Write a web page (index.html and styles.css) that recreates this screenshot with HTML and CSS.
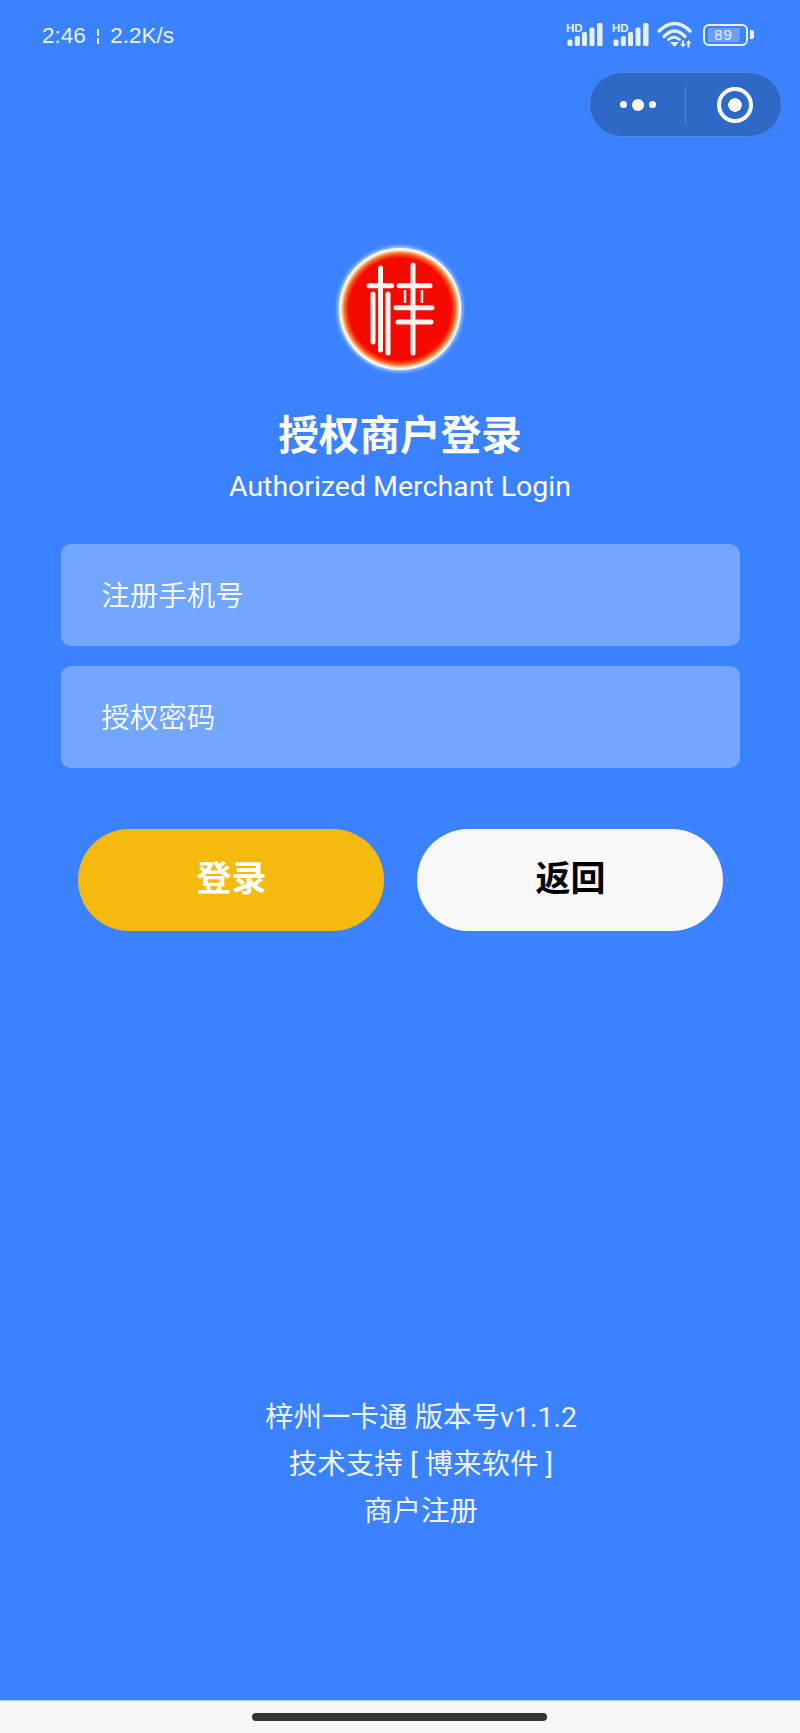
FILE: index.html
```html
<!DOCTYPE html>
<html lang="zh-CN">
<head>
    <meta charset="UTF-8">
    <meta name="viewport" content="width=device-width, initial-scale=1.0">
    <title>授权商户登录</title>
    <link rel="stylesheet" href="styles.css">
</head>
<body>

    <!-- Status bar -->
    <div class="status-bar">
        <span class="status-time">2:46 <i class="status-sep"></i> 2.2K/s</span>
        <div class="status-icons">
            <svg class="signal" width="37" height="23" viewBox="0 0 37 23">
                <text x="0" y="8.500" class="hd">HD</text>
                <rect x="1.500" y="16.500" width="5" height="6.500" rx="1.500"/>
                <rect x="8.800" y="13" width="5" height="10" rx="1.500"/>
                <rect x="16" y="9" width="5" height="14" rx="1.500"/>
                <rect x="23.500" y="4.500" width="5" height="18.500" rx="1.500"/>
                <rect x="31" y="0" width="5.500" height="23" rx="1.500"/>
            </svg>
            <svg class="signal" width="37" height="23" viewBox="0 0 37 23">
                <text x="0" y="8.500" class="hd">HD</text>
                <rect x="1.500" y="16.500" width="5" height="6.500" rx="1.500"/>
                <rect x="8.800" y="13" width="5" height="10" rx="1.500"/>
                <rect x="16" y="9" width="5" height="14" rx="1.500"/>
                <rect x="23.500" y="4.500" width="5" height="18.500" rx="1.500"/>
                <rect x="31" y="0" width="5.500" height="23" rx="1.500"/>
            </svg>
            <svg class="wifi" width="35" height="26" viewBox="0 0 35 26">
                <path d="M2 9 Q17.500 -6 33 9"/>
                <path d="M7 14.500 Q17.500 3.500 28 14.500"/>
                <path d="M11.500 17.500 Q17 13 22.500 17.500" class="wifi-thin"/>
                <polygon class="wifi-fill" points="13,20 22,20 17.500,25"/>
                <polygon class="wifi-fill" points="26,25.500 23,22 25,22 25,18.500 27,18.500 27,22 29,22"/>
                <polygon class="wifi-fill" points="31.500,18 28.800,21.500 30.500,21.500 30.500,25.500 32.500,25.500 32.500,21.500 34.500,21.500"/>
            </svg>
            <div class="battery">
                <div class="battery-body"><span class="battery-level">89</span></div>
                <div class="battery-tip"></div>
            </div>
        </div>
    </div>

    <!-- Mini program capsule -->
    <div class="capsule-row">
        <div class="capsule">
            <div class="capsule-dots"><i></i><b></b><i></i></div>
            <div class="capsule-line"></div>
            <div class="capsule-target"></div>
        </div>
    </div>

    <!-- Login -->
    <main class="login">
        <svg class="logo" width="130" height="130" viewBox="0 0 130 130">
            <defs>
                <radialGradient id="logoFill">
                    <stop offset="0.84" stop-color="#f60a00"/>
                    <stop offset="0.91" stop-color="#fa6a20"/>
                    <stop offset="0.97" stop-color="#fff2e6"/>
                    <stop offset="1" stop-color="#ffffff"/>
                </radialGradient>
                <filter id="logoGlow" x="-10%" y="-10%" width="120%" height="120%">
                    <feGaussianBlur stdDeviation="2"/>
                </filter>
            </defs>
            <circle cx="65" cy="65" r="62" fill="#d8e7ff" filter="url(#logoGlow)"/>
            <circle cx="65" cy="65" r="61" fill="url(#logoFill)"/>
            <g class="logo-mark">
                <line x1="34" y1="41.700" x2="56.700" y2="41.700"/>
                <line x1="45.500" y1="24" x2="45.500" y2="106"/>
                <line x1="38" y1="50" x2="38" y2="98"/>
                <line x1="53" y1="50" x2="53" y2="109"/>
                <line x1="64" y1="41.700" x2="95" y2="41.700"/>
                <line x1="61" y1="63.700" x2="97" y2="63.700"/>
                <line x1="63" y1="78" x2="96" y2="78"/>
                <line x1="78" y1="21" x2="78" y2="109"/>
            </g>
            <g class="logo-tick">
                <line x1="70" y1="46" x2="70" y2="59"/>
                <line x1="87" y1="46" x2="87" y2="59"/>
            </g>
        </svg>
        <h1 class="login-title">授权商户登录</h1>
        <p class="login-sub">Authorized Merchant Login</p>

        <div class="login-form">
            <input class="field" type="text" placeholder="注册手机号">
            <input class="field" type="password" placeholder="授权密码">
        </div>

        <div class="login-btns">
            <button class="btn btn-yellow">登录</button>
            <button class="btn btn-white">返回</button>
        </div>
    </main>

    <!-- Footer links -->
    <div class="foot">
        <p>梓州一卡通 版本号v1.1.2</p>
        <p>技术支持 [ 博来软件 ]</p>
        <p>商户注册</p>
    </div>

    <!-- Home indicator -->
    <div class="nav-bar"><div class="nav-pill"></div></div>

</body>
</html>
```

FILE: styles.css
```css
* {
    box-sizing: border-box;
}

html, body {
    margin: 0;
    padding: 0;
}

body {
    width: 800px;
    height: 1733px;
    display: flex;
    flex-direction: column;
    background-color: #3a82ff;
    color: white;
    font-family: Roboto, "Noto Sans CJK SC", sans-serif;
    overflow: hidden;
}

/* Status bar */
.status-bar {
    height: 72px;
    padding: 0 46px 0 42px;
    display: flex;
    justify-content: space-between;
    align-items: center;
    color: #e6f0ff;
}

.status-time {
    font-family: "Liberation Sans", sans-serif;
    font-size: 22.500px;
    display: flex;
    align-items: center;
    gap: 5px;
    white-space: pre;
}

.status-sep {
    width: 2px;
    height: 15px;
    background: linear-gradient(#e6f0ff 45%, transparent 45%, transparent 60%, #e6f0ff 60%);
}

.status-icons {
    display: flex;
    align-items: center;
    gap: 8px;
    padding-bottom: 3px;
}

.signal {
    fill: #e6f0ff;
}

.signal + .signal {
    margin-left: 1px;
}

.hd {
    font-family: "Liberation Sans", sans-serif;
    font-size: 11.500px;
    font-weight: bold;
}

.wifi {
    fill: none;
    stroke: #e6f0ff;
    stroke-width: 3.300;
    stroke-linecap: round;
    margin: 0 3px 0 0;
}

.wifi-thin {
    stroke-width: 2.800;
}

.wifi-fill {
    fill: #e6f0ff;
    stroke: none;
}

.battery {
    display: flex;
    align-items: center;
    gap: 2px;
}

.battery-body {
    width: 45px;
    height: 22px;
    border: 2.500px solid #e6f0ff;
    border-radius: 6px;
    padding: 2px 2.500px;
}

.battery-level {
    display: block;
    width: 32px;
    height: 100%;
    background-color: #6a9fff;
    font-family: "Liberation Sans", sans-serif;
    font-size: 15px;
    line-height: 13px;
    letter-spacing: 1px;
    text-align: center;
}

.battery-tip {
    width: 4px;
    height: 9px;
    border-radius: 0 2px 2px 0;
    background-color: #e6f0ff;
}

/* Capsule */
.capsule-row {
    display: flex;
    justify-content: flex-end;
    padding-right: 18px;
}

.capsule {
    width: 193px;
    height: 65px;
    display: flex;
    align-items: center;
    background-color: #2e69c8;
    border: 1px solid #5088e6;
    border-radius: 33px;
}

.capsule-dots {
    width: 95px;
    display: flex;
    align-items: center;
    justify-content: center;
    gap: 5px;
}

.capsule-dots i {
    width: 7px;
    height: 7px;
    border-radius: 50%;
    background-color: white;
}

.capsule-dots b {
    width: 12px;
    height: 12px;
    border-radius: 50%;
    background-color: white;
}

.capsule-line {
    width: 1px;
    height: 38px;
    background-color: #5088e6;
}

.capsule-target {
    width: 36px;
    height: 36px;
    margin-left: 31px;
    border: 4.500px solid white;
    border-radius: 50%;
    background: radial-gradient(circle, white 0, white 6.500px, transparent 7px);
}

/* Login */
.login {
    display: flex;
    flex-direction: column;
    align-items: center;
    padding-top: 107px;
}

.logo {
    display: block;
}

.logo-mark {
    stroke: #fff1ee;
    stroke-width: 5;
    stroke-linecap: round;
}

.logo-tick {
    stroke: #fff1ee;
    stroke-width: 2.500;
}

.login-title {
    margin: 34px 0 0;
    font-size: 40.600px;
    line-height: 56px;
    font-weight: bold;
}

.login-sub {
    margin: 2px 0 0;
    font-size: 28.500px;
    line-height: 42px;
}

.login-form {
    width: 679px;
    margin-top: 36px;
    display: flex;
    flex-direction: column;
    gap: 20px;
}

.field {
    display: block;
    width: 100%;
    height: 102px;
    padding: 2px 41px 0;
    border: none;
    border-radius: 10px;
    outline: none;
    background-color: #72a6ff;
    color: white;
    font-family: Roboto, "Noto Sans CJK SC", sans-serif;
    font-size: 28.500px;
}

.field::placeholder {
    color: white;
    opacity: 0.92;
}

.login-btns {
    margin-top: 61px;
    display: flex;
    gap: 33px;
}

.btn {
    width: 306px;
    height: 102px;
    padding: 0 0 10px 2px;
    border: none;
    border-radius: 51px;
    font-family: "Noto Sans CJK SC", sans-serif;
    font-size: 35px;
    font-weight: bold;
}

.btn-yellow {
    background-color: #f6b90d;
    color: white;
}

.btn-white {
    background-color: #f8f8f8;
    color: black;
}

/* Footer links */
.foot {
    margin-top: auto;
    padding: 0 0 0 42px;
    text-align: center;
    font-size: 28.500px;
    color: #eef4ff;
}

.foot p {
    margin: 0;
    line-height: 47px;
}

.nav-bar {
    margin-top: 165px;
    height: 33px;
    padding: 12px 2px 0 0;
    background-color: #f7f7f7;
    border-top: 1px solid #a9c8ff;
    display: flex;
    justify-content: center;
}

.nav-pill {
    width: 295px;
    height: 8px;
    border-radius: 4px;
    background-color: #333333;
}
```
